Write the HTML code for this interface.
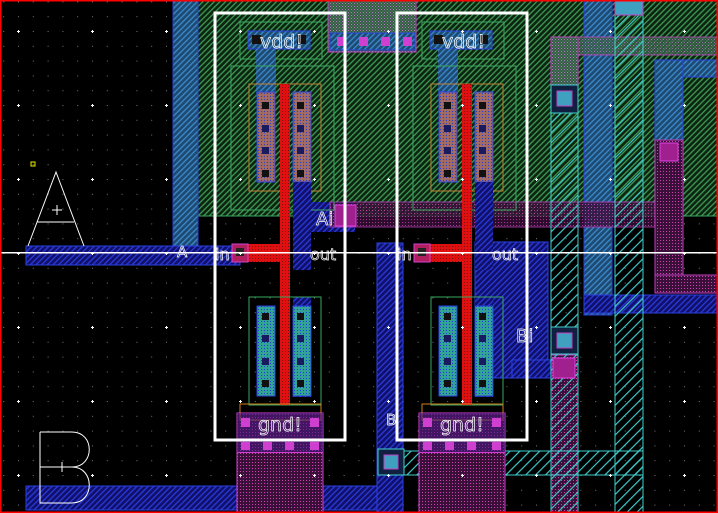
<!DOCTYPE html>
<html><head><meta charset="utf-8"><style>
html,body{margin:0;padding:0;background:#000;}
svg{display:block}
text{font-family:"DejaVu Sans","Liberation Sans",sans-serif;fill:none;stroke:#fff;stroke-width:0.7}
</style></head><body>
<svg width="718" height="513" viewBox="0 0 718 513" xmlns="http://www.w3.org/2000/svg">
<defs>
<pattern id="dots" width="14.8" height="14.8" patternUnits="userSpaceOnUse" x="3.2" y="1.4"><rect x="0" y="0" width="1" height="1" fill="#777"/></pattern>
<pattern id="bigdots" width="74" height="74" patternUnits="userSpaceOnUse" x="17" y="30"><rect x="0" y="1" width="3" height="1" fill="#fff"/><rect x="1" y="0" width="1" height="3" fill="#fff"/></pattern>
<pattern id="nw" width="4" height="4" patternUnits="userSpaceOnUse" patternTransform="rotate(45)"><rect width="4" height="4" fill="#0c2410"/><rect width="1.3" height="4" fill="#3e9a55"/></pattern>
<pattern id="m1" width="4" height="4" patternUnits="userSpaceOnUse" patternTransform="rotate(45)"><rect width="4" height="4" fill="#10106a"/><rect width="1.3" height="4" fill="#2a3ad8"/></pattern>
<pattern id="m1g" width="4" height="4" patternUnits="userSpaceOnUse" patternTransform="rotate(45)"><rect width="4" height="4" fill="#1f4a70"/><rect width="1.3" height="4" fill="#3a8ad0"/></pattern>
<pattern id="m2" width="7" height="7" patternUnits="userSpaceOnUse" patternTransform="rotate(45)"><rect width="7" height="7" fill="none"/><rect width="1.2" height="7" fill="#40c8c8"/></pattern>
<pattern id="mag" width="3" height="3" patternUnits="userSpaceOnUse"><rect width="3" height="3" fill="#3a0f3a"/><rect width="1" height="1" fill="#d040b0"/></pattern>
<pattern id="magg" width="3" height="3" patternUnits="userSpaceOnUse"><rect width="3" height="3" fill="#3a5a48"/><rect width="1" height="1" fill="#b080c0"/><rect x="1.5" y="1.5" width="1" height="1" fill="#50a070"/></pattern>
<pattern id="poly" width="3" height="3" patternUnits="userSpaceOnUse"><rect width="3" height="3" fill="#e01010"/><rect width="1" height="1" fill="#801010"/></pattern>
<pattern id="pd" width="3" height="3" patternUnits="userSpaceOnUse"><rect width="3" height="3" fill="#9a6a6a"/><rect width="1" height="1" fill="#3040c0"/><rect x="1.5" y="1.5" width="1" height="1" fill="#c07050"/></pattern>
<pattern id="nd" width="3" height="3" patternUnits="userSpaceOnUse"><rect width="3" height="3" fill="#30a0a0"/><rect width="1" height="1" fill="#2040d0"/><rect x="1.5" y="1.5" width="1" height="1" fill="#40b060"/></pattern>
<g id="cell">
  <rect x="240" y="22" width="82" height="37" fill="none" stroke="#3aa860"/>
  <rect x="248" y="31" width="62" height="18" fill="url(#m1g)" stroke="#2a40e0"/>
  <rect x="252" y="35" width="9" height="9" fill="#111"/>
  <rect x="297" y="35" width="9" height="9" fill="#111"/>
  <rect x="256" y="49" width="20" height="45" fill="url(#m1g)"/>
  <rect x="231" y="66" width="103" height="144" fill="none" stroke="#3aa860"/>
  <rect x="249" y="84" width="72" height="107" fill="none" stroke="#c08030"/>
  <rect x="257" y="92" width="18" height="90" fill="url(#pd)" stroke="#2a40e0"/>
  <rect x="293" y="92" width="18" height="90" fill="url(#pd)" stroke="#2a40e0"/>
  <rect x="262" y="102" width="7" height="7" fill="#111"/><rect x="297" y="102" width="7" height="7" fill="#111"/>
  <rect x="262" y="125" width="7" height="7" fill="#1a1a60"/><rect x="297" y="125" width="7" height="7" fill="#1a1a60"/>
  <rect x="262" y="147" width="7" height="7" fill="#1a1a60"/><rect x="297" y="147" width="7" height="7" fill="#1a1a60"/>
  <rect x="262" y="170" width="7" height="7" fill="#111"/><rect x="297" y="170" width="7" height="7" fill="#111"/>
  <rect x="293" y="182" width="18" height="88" fill="url(#m1)"/>
  <rect x="293" y="297" width="18" height="100" fill="url(#m1)"/>
  <rect x="280" y="84" width="10" height="321" fill="url(#poly)"/>
  <rect x="248" y="244" width="42" height="18" fill="url(#poly)"/>
  <rect x="232" y="244" width="16" height="18" fill="#b02060" stroke="#d040d0"/>
  <rect x="236" y="248" width="8" height="8" fill="#222"/>
  <rect x="249" y="297" width="72" height="108" fill="none" stroke="#3aa860"/>
  <rect x="257" y="306" width="18" height="90" fill="url(#nd)" stroke="#2a40e0"/>
  <rect x="293" y="306" width="18" height="90" fill="url(#nd)" stroke="#2a40e0"/>
  <rect x="262" y="313" width="7" height="7" fill="#111"/><rect x="297" y="313" width="7" height="7" fill="#111"/>
  <rect x="262" y="335" width="7" height="7" fill="#1a1a60"/><rect x="297" y="335" width="7" height="7" fill="#1a1a60"/>
  <rect x="262" y="358" width="7" height="7" fill="#1a1a60"/><rect x="297" y="358" width="7" height="7" fill="#1a1a60"/>
  <rect x="262" y="380" width="7" height="7" fill="#111"/><rect x="297" y="380" width="7" height="7" fill="#111"/>
  <rect x="280" y="306" width="10" height="99" fill="url(#poly)"/>
  <rect x="237" y="413" width="86" height="100" fill="url(#mag)" stroke="#d040d0"/>
  <rect x="240" y="404" width="81" height="16" fill="none" stroke="#d08020"/>
  <rect x="237" y="413" width="86" height="40" fill="#4a1a80" opacity="0.6"/>
  <rect x="241" y="418" width="9" height="9" fill="#d040d0"/><rect x="310" y="418" width="9" height="9" fill="#d040d0"/>
  <rect x="241" y="442" width="9" height="8" fill="#d040d0"/><rect x="263" y="442" width="9" height="8" fill="#d040d0"/>
  <rect x="285" y="442" width="9" height="8" fill="#d040d0"/><rect x="310" y="442" width="9" height="8" fill="#d040d0"/>
  <rect x="237" y="452" width="86" height="1" fill="#d040d0"/>
  <rect x="215" y="13" width="130" height="427" fill="none" stroke="#fff" stroke-width="3"/>
</g>
</defs>
<rect width="718" height="513" fill="#000"/>
<rect width="718" height="513" fill="url(#dots)"/>
<rect x="173" y="0" width="545" height="216" fill="url(#nw)" stroke="#3aa860"/>
<rect x="173" y="0" width="25" height="265" fill="url(#m1g)" stroke="#2a40e0"/>
<rect x="26" y="246" width="214" height="19" fill="url(#m1)" stroke="#2a40e0"/>
<rect x="26" y="486" width="376" height="24" fill="url(#m1)" stroke="#2a40e0"/>
<rect x="328" y="0" width="88" height="52" fill="url(#magg)" stroke="#c040c0"/>
<rect x="330" y="33" width="85" height="17" fill="url(#m1g)" stroke="#2a40e0"/>
<rect x="337" y="37" width="9" height="9" fill="#d040d0"/><rect x="359" y="37" width="9" height="9" fill="#d040d0"/><rect x="381" y="37" width="9" height="9" fill="#d040d0"/><rect x="403" y="37" width="9" height="9" fill="#d040d0"/>
<rect x="377" y="243" width="26" height="270" fill="url(#m1)" stroke="#2a40e0"/>
<rect x="475" y="242" width="73" height="136" fill="url(#m1)" stroke="#2a40e0"/>
<rect x="512" y="360" width="40" height="18" fill="url(#m1)" stroke="#2a40e0"/>
<rect x="293" y="202" width="62" height="30" fill="url(#m1)"/>
<rect x="584" y="0" width="28" height="315" fill="url(#m1g)" stroke="#2a40e0"/>
<rect x="584" y="295" width="134" height="18" fill="url(#m1)" stroke="#2a40e0"/>
<rect x="655" y="60" width="63" height="17" fill="url(#m1g)" stroke="#2a40e0"/>
<rect x="655" y="60" width="28" height="105" fill="url(#m1g)" stroke="#2a40e0"/>
<rect x="330" y="202" width="353" height="25" fill="url(#mag)" stroke="#c040c0" opacity="0.8"/>
<rect x="551" y="37" width="167" height="18" fill="url(#magg)" stroke="#c040c0" opacity="0.8"/>
<rect x="551" y="37" width="27" height="50" fill="url(#magg)" stroke="#c040c0"/>
<rect x="335" y="205" width="21" height="21" fill="#a02090" stroke="#e040e0"/>
<rect x="655" y="140" width="28" height="153" fill="url(#mag)" stroke="#c040c0"/>
<rect x="655" y="275" width="63" height="18" fill="url(#mag)" stroke="#c040c0"/>
<rect x="660" y="143" width="18" height="18" fill="#a02090" stroke="#e040e0"/>
<rect x="551" y="355" width="27" height="158" fill="url(#mag)" stroke="#c040c0"/>
<rect x="551" y="85" width="27" height="428" fill="url(#m2)" stroke="#40d0d0"/>
<rect x="615" y="0" width="28" height="513" fill="url(#m2)" stroke="#40d0d0"/>
<rect x="378" y="451" width="265" height="24" fill="url(#m2)" stroke="#40d0d0"/>
<rect x="551" y="85" width="27" height="28" fill="#102040" stroke="#40d0d0"/><rect x="557" y="91" width="15" height="15" fill="#40a0c0" stroke="#c040c0"/>
<rect x="551" y="327" width="27" height="27" fill="#102040" stroke="#40d0d0"/><rect x="557" y="333" width="15" height="15" fill="#40a0c0" stroke="#c040c0"/>
<rect x="553" y="358" width="22" height="20" fill="#a02090" stroke="#e040e0"/>
<rect x="378" y="449" width="26" height="26" fill="#102040" stroke="#40d0d0"/><rect x="384" y="455" width="14" height="14" fill="#40a0c0" stroke="#c040c0"/>
<rect x="615" y="0" width="28" height="15" fill="#40a0c0" stroke="#c040c0"/>
<use href="#cell"/>
<use href="#cell" transform="translate(182,0)"/>
<rect width="718" height="513" fill="url(#bigdots)"/>
<rect x="0" y="252" width="718" height="1.5" fill="#fff"/>
<text x="260" y="48" font-size="19">vdd!</text>
<text x="442" y="48" font-size="19">vdd!</text>
<text x="258" y="431" font-size="19">gnd!</text>
<text x="440" y="431" font-size="19">gnd!</text>
<text x="215" y="260" font-size="16">in</text>
<text x="397" y="260" font-size="16">in</text>
<text x="310" y="260" font-size="16">out</text>
<text x="492" y="260" font-size="16">out</text>
<text x="316" y="225" font-size="18">Ai</text>
<text x="516" y="342" font-size="18">Bi</text>
<text x="177" y="257" font-size="15">A</text>
<text x="386" y="425" font-size="15">B</text>
<path d="M28 246 L56 172 L84 246 M37 222 L74 222 M57 205 L57 215 M52 210 L62 210" fill="none" stroke="#fff"/>
<path d="M40 432 L40 503 L72 503 C95 503 95 467 72 467 L40 467 M40 432 L72 432 C95 432 95 467 72 467 M57 467 L67 467 M62 462 L62 472" fill="none" stroke="#fff"/>
<rect x="31" y="162" width="4" height="4" fill="none" stroke="#ee0"/>
<rect x="0.5" y="0.5" width="717" height="512" fill="none" stroke="#f00" stroke-width="2"/>
</svg>
</body></html>
